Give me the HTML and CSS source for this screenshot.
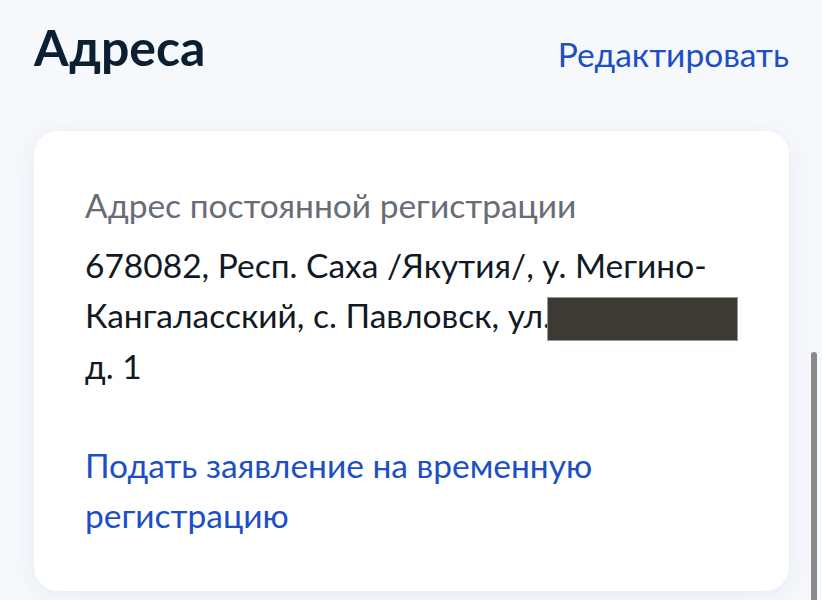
FILE: index.html
```html
<!DOCTYPE html>
<html lang="ru">

<head>
    <meta charset="UTF-8">
    <meta name="viewport" content="width=device-width, initial-scale=1.0">
    <title>Адреса</title>
    <link rel="stylesheet" href="styles.css">
</head>

<body>
    <div class="header">
        <h1>Адреса</h1>
        <a class="edit" href="#">Редактировать</a>
    </div>

    <div class="card">
        <div class="label">Адрес постоянной регистрации</div>
        <div class="address">678082, Респ. Саха /Якутия/, у. Мегино-Кангаласский, с. Павловск, <span class="nowrap">ул.<span class="hidden"></span></span> д.&nbsp;1</div>
        <a class="link" href="#">Подать заявление на временную регистрацию</a>
    </div>

    <div class="scrollbar"></div>
</body>

</html>
```

FILE: styles.css
```css
body {
    margin: 0;
    padding: 0 33px 10px 34px;
    background-color: #f6f8fc;
    font-family: Lato, "Open Sans", sans-serif;
    color: #0b1f33;
}

.header {
    display: flex;
    justify-content: space-between;
    align-items: baseline;
    padding-top: 17px;
}

h1 {
    margin: 0;
    font-size: 50px;
    line-height: 60px;
    font-weight: 700;
}

.edit {
    position: relative;
    top: 1px;
    font-size: 33.5px;
    color: #1c4fc4;
    text-decoration: none;
}

.card {
    margin-top: 54px;
    padding: 49px 46px 51px 51px;
    background-color: #fff;
    border-radius: 24px;
    box-shadow: 0 4px 24px rgba(40, 60, 140, 0.07);
}

.label {
    font-size: 33.5px;
    line-height: 50px;
    color: #686d75;
}

.address {
    margin-top: 10px;
    font-size: 33.5px;
    line-height: 50px;
    color: #111a24;
}

.nowrap {
    white-space: nowrap;
}

.hidden {
    display: inline-block;
    width: 189px;
    height: 42px;
    margin-left: -4px;
    vertical-align: -13px;
    background-color: #3d3934;
    border: 1px solid #9c9893;
}

.link {
    display: block;
    margin-top: 49px;
    font-size: 33.5px;
    line-height: 50px;
    color: #1c4fc4;
    text-decoration: none;
}

.scrollbar {
    position: fixed;
    right: 5px;
    top: 352px;
    width: 6px;
    height: 260px;
    border-radius: 3px;
    background-color: #8a8a8a;
}
```
